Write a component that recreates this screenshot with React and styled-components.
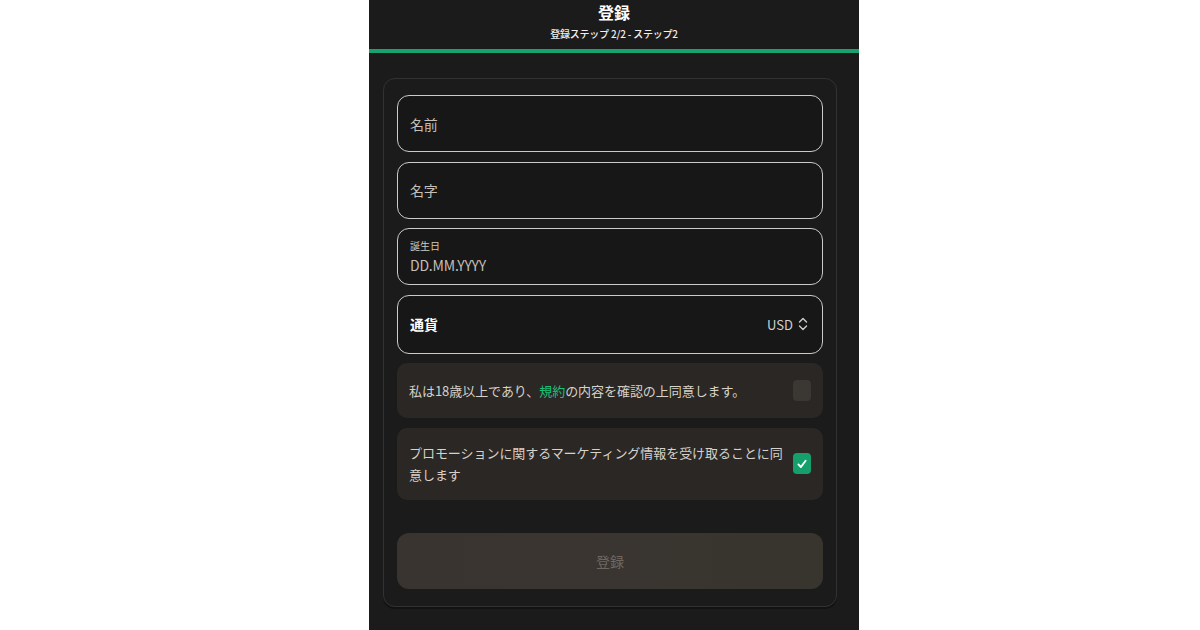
import styled, { createGlobalStyle } from 'styled-components'

const GlobalStyle = createGlobalStyle`
    html, body {
        margin: 0;
        padding: 0;
        background: #ffffff;
    }
    * {
        box-sizing: border-box;
    }
`

function CheckIcon() {
    return (
        <svg width="12" height="12" viewBox="0 0 12 12" fill="none">
            <path d="M2.4 6.4 L4.9 9 L9.6 2.8" stroke="#ffffff" strokeWidth="1.9" strokeLinecap="round" strokeLinejoin="round" />
        </svg>
    )
}

function UpDownIcon() {
    return (
        <svg width="10" height="16" viewBox="0 0 10 16" fill="none">
            <path d="M1.5 6 L5 2.5 L8.5 6" stroke="#cfcfcf" strokeWidth="1.4" strokeLinecap="round" strokeLinejoin="round" />
            <path d="M1.5 10 L5 13.5 L8.5 10" stroke="#cfcfcf" strokeWidth="1.4" strokeLinecap="round" strokeLinejoin="round" />
        </svg>
    )
}

function App() {
    return (
        <Page>
            <GlobalStyle />
            <Panel>
                <Header>
                    <h1>登録</h1>
                    <p>登録ステップ 2/2 - ステップ2</p>
                </Header>
                <Progress />
                <Card>
                    <Field><Placeholder>名前</Placeholder></Field>
                    <Field><Placeholder>名字</Placeholder></Field>
                    <Field stacked>
                        <SmallLabel>誕生日</SmallLabel>
                        <Placeholder>DD.MM.YYYY</Placeholder>
                    </Field>
                    <Field tall>
                        <FieldTitle>通貨</FieldTitle>
                        <Select>USD<UpDownIcon /></Select>
                    </Field>
                    <Consent>
                        <ConsentText>私は18歳以上であり、<TermsLink>規約</TermsLink>の内容を確認の上同意します。</ConsentText>
                        <Box />
                    </Consent>
                    <Consent>
                        <ConsentText>プロモーションに関するマーケティング情報を受け取ることに同意します</ConsentText>
                        <Box checked><CheckIcon /></Box>
                    </Consent>
                    <Submit>登録</Submit>
                </Card>
            </Panel>
        </Page>
    )
}
export default App;

const Page = styled.div`
    width: 1200px;
    height: 630px;
    display: flex;
    justify-content: center;
    background: #ffffff;
    font-family: "Noto Sans CJK JP", "Noto Sans", sans-serif;
`
const Panel = styled.div`
    width: 490px;
    height: 630px;
    display: flex;
    flex-direction: column;
    background: #1b1b1b;
    margin-left: 28px;
`
const Header = styled.div`
    height: 49px;
    display: flex;
    flex-direction: column;
    align-items: center;
    padding-top: 1px;
    h1 {
        margin: 0;
        font-size: 16px;
        line-height: 22px;
        font-weight: 700;
        color: #ffffff;
    }
    p {
        margin: 0;
        margin-top: 4px;
        font-size: 10px;
        line-height: 14px;
        font-weight: 500;
        color: #f0f0f0;
        letter-spacing: -0.2px;
    }
`
const Progress = styled.div`
    height: 4px;
    background: #17a26e;
`
const Card = styled.div`
    margin: 25px 22px 0 14px;
    padding: 16px 13px 17px 13px;
    border: 1px solid #323232;
    border-radius: 12px;
    display: flex;
    flex-direction: column;
    gap: 9.5px;
    box-shadow: 0 2px 0 #121212;
`
const Field = styled.div`
    height: ${p => (p.tall ? '59px' : '57px')};
    border: 1.5px solid #cbcbcb;
    border-radius: 12px;
    background: #171717;
    padding: 0 12px;
    display: flex;
    flex-direction: ${p => (p.stacked ? 'column' : 'row')};
    justify-content: ${p => (p.stacked ? 'center' : 'space-between')};
    align-items: ${p => (p.stacked ? 'flex-start' : 'center')};
    gap: ${p => (p.stacked ? '2px' : '0')};
`
const Placeholder = styled.span`
    font-size: 14px;
    line-height: 20px;
    color: #c4bfb8;
    letter-spacing: -0.2px;
`
const SmallLabel = styled.span`
    font-size: 10px;
    line-height: 14px;
    color: #cfcac3;
`
const FieldTitle = styled.span`
    font-size: 14px;
    font-weight: 700;
    color: #ffffff;
`
const Select = styled.span`
    display: flex;
    align-items: center;
    gap: 5px;
    font-size: 13px;
    color: #d0d0d0;
    margin-right: 2px;
`
const Consent = styled.div`
    min-height: 55px;
    border-radius: 10px;
    background: #2a2724;
    padding: 14px 12px 14px 12px;
    display: flex;
    align-items: center;
    justify-content: space-between;
    gap: 6px;
`
const ConsentText = styled.span`
    font-size: 13px;
    line-height: 22px;
    color: #d6d1c9;
    letter-spacing: -0.05px;
`
const TermsLink = styled.span`
    color: #1fc07e;
`
const Box = styled.div`
    flex: none;
    width: 18px;
    height: 21px;
    border-radius: 4px;
    background: ${p => (p.checked ? '#15a06b' : '#3b3732')};
    display: flex;
    align-items: center;
    justify-content: center;
`
const Submit = styled.button`
    margin-top: 24px;
    height: 56px;
    border: none;
    border-radius: 12px;
    background: linear-gradient(90deg, #3a3430, #393530 60%, #37352e);
    font-family: "Noto Sans CJK JP", "Noto Sans", sans-serif;
    font-size: 14px;
    color: #6d6862;
`
